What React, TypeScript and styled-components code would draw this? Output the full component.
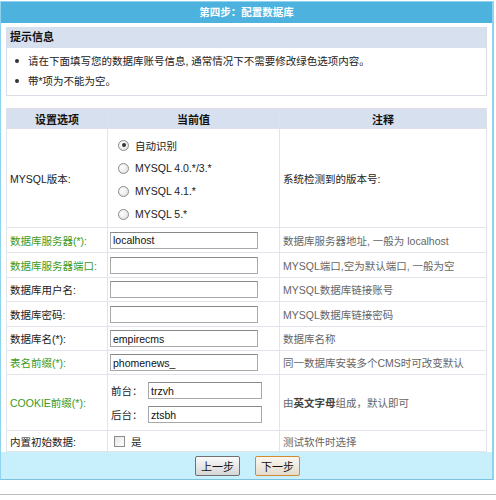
import styled, { createGlobalStyle } from "styled-components"

const GlobalStyle = createGlobalStyle`
    body {
        margin: 0;
        background: #fff;
        font-family: "Liberation Sans", "Noto Sans CJK SC", sans-serif;
        font-size: 10.5px;
        color: #222;
    }
`
const Frame = styled.div`
    width: 491px;
    margin-top: 1px;
    border: 1px solid #8fd3ef;
    border-right-width: 2px;
    border-bottom-color: #7cc2de;
`
const Title = styled.div`
    height: 21px;
    line-height: 21px;
    background: #4db3de;
    color: #fff;
    font-weight: bold;
    text-align: center;
`
const Body = styled.div`
    padding: 4px 5px 0;
    background: #fff;
`
const HintBox = styled.div`
    border: 1px solid #dcdce6;
    border-top: none;
`
const HintHead = styled.div`
    height: 21px;
    line-height: 21px;
    padding-left: 3px;
    background: #d6e0ef;
    font-weight: bold;
    font-size: 11px;
    color: #111;
`
const HintList = styled.ul`
    margin: 0;
    padding: 3px 0 4px 0;
    list-style: none;
`
const HintItem = styled.li`
    height: 20px;
    line-height: 20px;
    padding-left: 21px;
    position: relative;
    &::before {
        content: "";
        position: absolute;
        left: 8px;
        top: 8px;
        width: 4px;
        height: 4px;
        border-radius: 50%;
        background: #333;
    }
`
const Table = styled.table`
    margin-top: 12px;
    width: 100%;
    border-collapse: collapse;
    table-layout: fixed;
`
const HeadCell = styled.th`
    height: 19px;
    padding: 0;
    background: #d6e0ef;
    font-weight: bold;
    font-size: 11px;
    color: #111;
    text-align: center;
    border: 1px solid #e0e0ea;
`
const Row = styled.tr<{ h: number }>`
    height: ${({ h }) => h}px;
`
const Label = styled.td<{ green?: boolean }>`
    padding: 0 0 0 3px;
    border: 1px solid #e3e3ec;
    white-space: nowrap;
    color: ${({ green }) => (green ? "#3a9a1e" : "#222")};
`
const Value = styled.td`
    padding: 0 0 0 2px;
    border: 1px solid #e3e3ec;
`
const Note = styled.td<{ dark?: boolean }>`
    padding: 0 0 0 3px;
    border: 1px solid #e3e3ec;
    white-space: nowrap;
    color: ${({ dark }) => (dark ? "#222" : "#666")};
    b {
        color: #444;
    }
`
const Field = styled.input<{ w: number }>`
    box-sizing: border-box;
    width: ${({ w }) => w}px;
    height: 17px;
    margin: 0;
    padding: 0 2px;
    border: 1px solid #a8a8a8;
    border-top-color: #888;
    font-family: "Liberation Sans", "Noto Sans CJK SC", sans-serif;
    font-size: 10.5px;
    color: #111;
    outline: none;
    display: block;
`
const RadioList = styled.div`
    display: flex;
    flex-direction: column;
    gap: 6px;
    padding: 7px 0 4px 8px;
`
const RadioLine = styled.label`
    display: flex;
    align-items: center;
    gap: 6px;
    height: 17px;
    color: #222;
`
const Radio = styled.input`
    appearance: none;
    width: 11px;
    height: 11px;
    margin: 0;
    border-radius: 50%;
    border: 1px solid #8c8c8c;
    background: radial-gradient(circle at 35% 35%, #fff, #dcdcdc);
    position: relative;
    &:checked::after {
        content: "";
        position: absolute;
        left: 2.5px;
        top: 2.5px;
        width: 4px;
        height: 4px;
        border-radius: 50%;
        background: #333;
    }
`
const CookieList = styled.div`
    display: flex;
    flex-direction: column;
    gap: 7px;
    padding-left: 1px;
`
const CookieLine = styled.div`
    display: flex;
    align-items: center;
    span {
        width: 37px;
    }
`
const CheckLine = styled.label`
    display: flex;
    align-items: center;
    gap: 6px;
    padding-left: 4px;
`
const Check = styled.input`
    appearance: none;
    width: 11px;
    height: 11px;
    margin: 0;
    border: 1px solid #8c8c8c;
    background: linear-gradient(135deg, #e6e6e6, #fff);
`
const Footer = styled.div`
    height: 27px;
    background: #c8effc;
    display: flex;
    align-items: center;
    justify-content: center;
    gap: 15px;
    padding-left: 2px;
`
const Button = styled.button<{ primary?: boolean }>`
    width: 45px;
    height: 20px;
    padding: 0;
    font-family: "Liberation Sans", "Noto Sans CJK SC", sans-serif;
    font-size: 11px;
    color: #111;
    border: 1px solid ${({ primary }) => (primary ? "#d08a34" : "#707070")};
    background: ${({ primary }) =>
        primary ? "linear-gradient(#fbf7ef, #e4dccb)" : "linear-gradient(#fafafa, #d6d6d6)"};
    border-radius: 2px;
`
const BottomRule = styled.div`
    margin-top: 14px;
    height: 1px;
    background: #bdbdbd;
`

const versions = ["自动识别", "MYSQL 4.0.*/3.*", "MYSQL 4.1.*", "MYSQL 5.*"]

const fields = [
    { label: "数据库服务器(*):", green: true, value: "localhost", note: "数据库服务器地址, 一般为 localhost", h: 25 },
    { label: "数据库服务器端口:", green: true, value: "", note: "MYSQL端口,空为默认端口, 一般为空", h: 25 },
    { label: "数据库用户名:", green: false, value: "", note: "MYSQL数据库链接账号", h: 24 },
    { label: "数据库密码:", green: false, value: "", note: "MYSQL数据库链接密码", h: 25 },
    { label: "数据库名(*):", green: false, value: "empirecms", note: "数据库名称", h: 24 },
    { label: "表名前缀(*):", green: true, value: "phomenews_", note: "同一数据库安装多个CMS时可改变默认", h: 24 },
]

function App() {
    return (
        <>
            <GlobalStyle />
            <Frame>
                <Title>第四步：配置数据库</Title>
                <Body>
                    <HintBox>
                        <HintHead>提示信息</HintHead>
                        <HintList>
                            <HintItem>请在下面填写您的数据库账号信息, 通常情况下不需要修改绿色选项内容。</HintItem>
                            <HintItem>带*项为不能为空。</HintItem>
                        </HintList>
                    </HintBox>
                    <Table>
                        <colgroup>
                            <col style={{ width: 101 }} />
                            <col style={{ width: 172 }} />
                            <col />
                        </colgroup>
                        <thead>
                            <tr>
                                <HeadCell>设置选项</HeadCell>
                                <HeadCell>当前值</HeadCell>
                                <HeadCell>注释</HeadCell>
                            </tr>
                        </thead>
                        <tbody>
                            <Row h={99}>
                                <Label>MYSQL版本:</Label>
                                <Value>
                                    <RadioList>
                                        {versions.map((v, i) => (
                                            <RadioLine key={v}>
                                                <Radio type="radio" name="ver" defaultChecked={i === 0} />
                                                {v}
                                            </RadioLine>
                                        ))}
                                    </RadioList>
                                </Value>
                                <Note dark>系统检测到的版本号:</Note>
                            </Row>
                            {fields.map((f) => (
                                <Row h={f.h} key={f.label}>
                                    <Label green={f.green}>{f.label}</Label>
                                    <Value>
                                        <Field w={148} defaultValue={f.value} />
                                    </Value>
                                    <Note>{f.note}</Note>
                                </Row>
                            ))}
                            <Row h={56}>
                                <Label green>COOKIE前缀(*):</Label>
                                <Value>
                                    <CookieList>
                                        <CookieLine>
                                            <span>前台：</span>
                                            <Field w={114} defaultValue="trzvh" />
                                        </CookieLine>
                                        <CookieLine>
                                            <span>后台：</span>
                                            <Field w={114} defaultValue="ztsbh" />
                                        </CookieLine>
                                    </CookieList>
                                </Value>
                                <Note>
                                    由<b>英文字母</b>组成，默认即可
                                </Note>
                            </Row>
                            <Row h={21}>
                                <Label>内置初始数据:</Label>
                                <Value>
                                    <CheckLine>
                                        <Check type="checkbox" />是
                                    </CheckLine>
                                </Value>
                                <Note>测试软件时选择</Note>
                            </Row>
                        </tbody>
                    </Table>
                </Body>
                <Footer>
                    <Button>上一步</Button>
                    <Button primary>下一步</Button>
                </Footer>
            </Frame>
            <BottomRule />
        </>
    )
}
export default App
